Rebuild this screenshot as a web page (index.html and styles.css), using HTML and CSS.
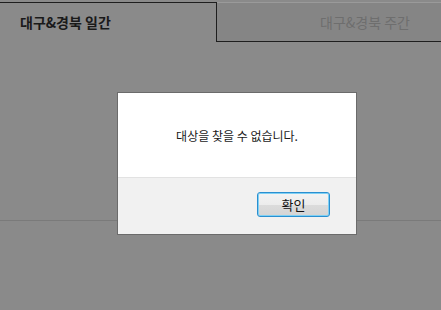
FILE: index.html
```html
<!DOCTYPE html>
<html>
<head>
<meta charset="utf-8">
<link rel="stylesheet" href="styles.css">
</head>
<body>
  <div class="tabs">
    <div class="tab active">대구&amp;경북 일간</div>
    <div class="tab">대구&amp;경북 주간</div>
  </div>
  <div class="content"></div>
  <div class="rule"></div>

  <div class="dialog">
    <div class="dialog-body">
      <p>대상을 찾을 수 없습니다.</p>
    </div>
    <div class="dialog-foot">
      <button type="button">확인</button>
    </div>
  </div>
</body>
</html>
```

FILE: styles.css
```css
body {
    margin: 0;
    padding-top: 2px;
    background-color: #8a8a8a;
    font-family: "Noto Sans CJK KR", "Noto Sans", sans-serif;
    width: 441px;
    height: 308px;
    overflow: hidden;
}
.tabs {
    display: flex;
    height: 40px;
}
.tab {
    box-sizing: border-box;
    font-size: 14px;
    line-height: 38px;
}
.tab.active {
    width: 217px;
    padding-left: 20px;
    border-top: 1px solid #1e1e1e;
    border-right: 1px solid #1e1e1e;
    font-weight: bold;
    color: #1a1a1a;
}
.tab:not(.active) {
    flex: 1;
    padding-left: 103px;
    border-top: 1px solid #9a9a9a;
    border-bottom: 1px solid #1e1e1e;
    background-color: #858585;
    color: #6e6e6e;
}
.content {
    height: 178px;
}
.rule {
    border-top: 1px solid #7a7a7a;
}
.dialog {
    position: absolute;
    left: 117px;
    top: 92px;
    width: 238px;
    border: 1px solid #6b6b6b;
    background-color: #f1f1f1;
}
.dialog-body {
    height: 84px;
    background-color: #fff;
    border-bottom: 1px solid #e2e2e2;
    display: flex;
    align-items: center;
    justify-content: center;
}
.dialog-body p {
    margin: 0;
    font-size: 12px;
    color: #1a1a1a;
}
.dialog-foot {
    height: 56px;
    display: flex;
    justify-content: flex-end;
    align-items: flex-start;
}
button {
    margin-top: 14px;
    margin-right: 26px;
    width: 73px;
    height: 25px;
    border: 1px solid #2a8fd0;
    border-radius: 3px;
    box-shadow: inset 0 0 0 1px #7fd0f4;
    background: linear-gradient(#f3f3f3 0%, #ececec 50%, #dcdcdc 51%, #d4d4d4 100%);
    font-family: "Noto Sans CJK KR", sans-serif;
    font-size: 13px;
    color: #111;
    padding: 0;
}
```
